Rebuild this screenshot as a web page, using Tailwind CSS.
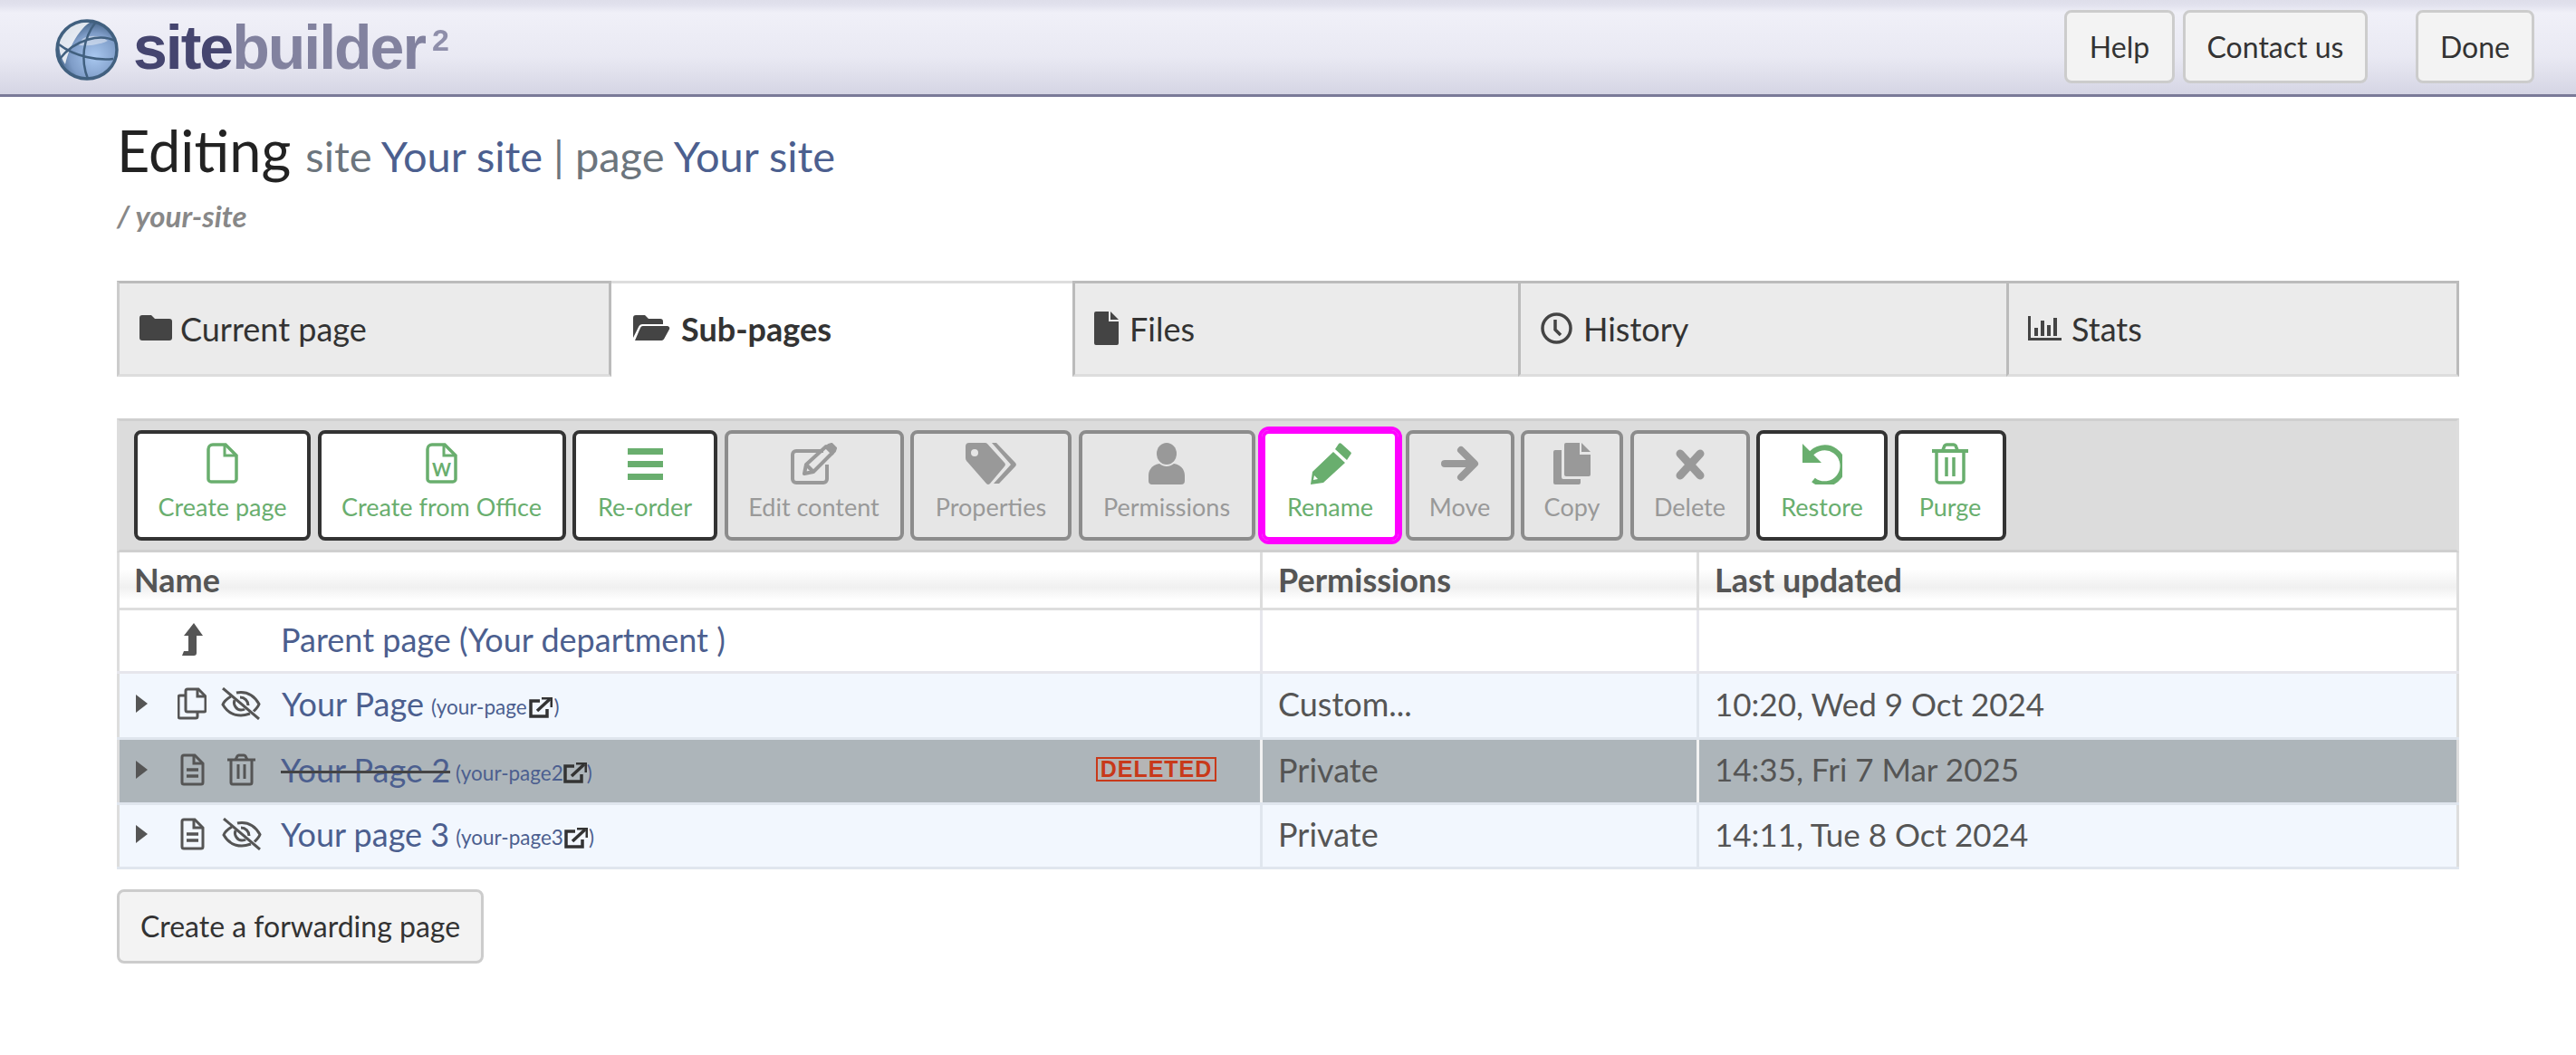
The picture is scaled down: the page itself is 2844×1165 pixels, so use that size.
<!DOCTYPE html>
<html lang="en">
<head>
  <meta charset="UTF-8">
  <title>Sitebuilder - Editing Your site</title>
  <script src="https://cdn.jsdelivr.net/npm/@tailwindcss/browser@4"></script>
</head>
<body class="bg-white font-['Lato','Noto_Sans',sans-serif] text-[#333]">
  <!-- Header -->
  <header class="h-[107px] border-b-[3px] border-[#7a7a98] bg-[linear-gradient(to_bottom,#dedeea_0,#e2e2ee_6px,#f0f0f8_14px,#e9e9f3_60%,#d5d5e4_100%)] flex items-start justify-between pl-[61px] pr-[46px]">
    <div class="flex items-start blur-[0.6px]">
      <svg class="mt-[21px] w-[70px] h-[68px]" viewBox="0 0 70 68">
        <defs>
          <radialGradient id="globe" cx="0.62" cy="0.62" r="0.6">
            <stop offset="0" stop-color="#a9c8f0"/>
            <stop offset="0.65" stop-color="#7f9dc8"/>
            <stop offset="1" stop-color="#456488"/>
          </radialGradient>
        </defs>
        <ellipse cx="35" cy="34" rx="34" ry="33" fill="url(#globe)"/>
        <path d="M8 14C16 6 26 3 38 4 28 10 16 28 11 50 4 40 2 26 8 14z" fill="#f2f4f8" opacity="0.9"/>
        <path d="M30 22c8-5 20-4 28 2-8 4-20 6-32 5z" fill="#dfe6f2" opacity="0.6"/>
        <g fill="none" stroke="#41607f" stroke-width="2.500">
          <ellipse cx="35" cy="34" rx="33" ry="32" stroke-width="3.500"/>
          <path d="M45 3C30 22 28 46 36 66M66 24C50 16 22 22 5 44M4 28C22 42 48 46 64 44"/>
        </g>
      </svg>
      <div class="ml-[16px] mt-[13px] font-['Liberation_Sans',sans-serif] font-bold text-[68px] leading-[78px] tracking-[-2px] text-[#82829f]"><span class="text-[#45456f]">site</span>builder</div>
      <div class="ml-[8px] mt-[24px] font-['Liberation_Sans',sans-serif] font-bold text-[34px] leading-[40px] text-[#8e8eaa]">2</div>
    </div>
    <nav class="flex items-start pt-[11px] text-[32px] leading-[40px] text-[#333]">
      <a class="h-[81px] w-[122px] flex items-center justify-center rounded-[8px] border-[3px] border-[#ccc] bg-[#f3f3f3]">Help</a>
      <a class="h-[81px] w-[204px] ml-[9px] flex items-center justify-center rounded-[8px] border-[3px] border-[#ccc] bg-[#f3f3f3]">Contact us</a>
      <a class="h-[81px] w-[131px] ml-[53px] flex items-center justify-center rounded-[8px] border-[3px] border-[#ccc] bg-[#f3f3f3]">Done</a>
    </nav>
  </header>

  <main class="px-[129px]">
    <h1 class="pt-[23px] h-[96px] font-normal text-[63px] leading-[72px] text-[#222] whitespace-nowrap">Editing <span class="text-[47px] text-[#6c757d]">site <a class="text-[#4c5f8f]">Your site</a> | page <a class="text-[#4c5f8f]">Your site</a></span></h1>
    <div class="mt-[15px] h-[40px] text-[33px] leading-[40px] italic font-bold text-[#888]">/ your-site</div>

    <!-- Tabs -->
    <div class="mt-[52px] flex h-[106px] text-[36px] text-[#333]">
      <a class="w-[546px] flex items-start pt-[28px] pl-[22px] gap-[9px] bg-[#ebebeb] border-t-[3px] border-l-[3px] border-r-[3px] border-b-[3px] border-t-[#bbb] border-l-[#ccc] border-r-[#bbb] border-b-[#ddd]">
        <svg class="w-[36px] h-[28px] mt-[7px]" viewBox="0 0 36 28" fill="#444"><path d="M3 0h10l4 4h16a3 3 0 0 1 3 3v18a3 3 0 0 1-3 3H3a3 3 0 0 1-3-3V3a3 3 0 0 1 3-3z"/></svg>
        <span class="leading-[44px]">Current page</span>
      </a>
      <a class="w-[509px] flex items-start pt-[28px] pl-[24px] gap-[12px] bg-white font-bold border-t-[3px] border-b-0 border-[#ddd]">
        <svg class="w-[41px] h-[28px] mt-[7px]" viewBox="0 0 41 28" fill="#444"><path d="M3 0h10l4 4h13a3 3 0 0 1 3 3v3H11a5 5 0 0 0-5 3L0 25V3a3 3 0 0 1 3-3z"/><path d="M11 12h27a2.500 2.500 0 0 1 2 3.500l-6 11a3 3 0 0 1-2.500 1.500H2l6-14a3 3 0 0 1 3-2z"/></svg>
        <span class="leading-[44px]">Sub-pages</span>
      </a>
      <a class="w-[492px] flex items-start pt-[28px] pl-[21px] gap-[12px] bg-[#ebebeb] border-t-[3px] border-l-[3px] border-b-[3px] border-t-[#bbb] border-l-[#bbb] border-b-[#ddd]">
        <svg class="w-[27px] h-[37px] mt-[3px]" viewBox="0 0 27 37" fill="#444"><path d="M2 0h14v11h11v24a2 2 0 0 1-2 2H2a2 2 0 0 1-2-2V2a2 2 0 0 1 2-2z"/><path d="M18 0l9 9h-9z"/></svg>
        <span class="leading-[44px]">Files</span>
      </a>
      <a class="w-[539px] flex items-start pt-[28px] pl-[22px] gap-[12px] bg-[#ebebeb] border-t-[3px] border-l-[3px] border-b-[3px] border-t-[#bbb] border-l-[#bbb] border-b-[#ddd]">
        <svg class="w-[35px] h-[35px] mt-[4px]" viewBox="0 0 35 35" fill="none" stroke="#444" stroke-width="3.500"><circle cx="17.500" cy="17.500" r="15.500"/><path d="M16 8v11l6 6"/></svg>
        <span class="leading-[44px]">History</span>
      </a>
      <a class="flex-1 flex items-start pt-[28px] pl-[21px] gap-[11px] bg-[#ebebeb] border-t-[3px] border-l-[3px] border-r-[3px] border-b-[3px] border-t-[#bbb] border-l-[#bbb] border-r-[#bbb] border-b-[#ddd]">
        <svg class="w-[37px] h-[27px] mt-[8px]" viewBox="0 0 37 27" fill="#444"><path d="M0 0h3v24h34v3H0z"/><path d="M7 13h4v9H7zM14 5h4v17h-4zM21 10h4v12h-4zM28 2h4v20h-4z"/></svg>
        <span class="leading-[44px]">Stats</span>
      </a>
    </div>

    <!-- Toolbar -->
    <div class="mt-[46px] h-[148px] bg-[#dcdcdc] border-y-[3px] border-y-[#cfcfcf] border-x-[3px] border-x-[#ddd] pl-[16px] pt-[10px] flex gap-[7.500px] text-[27px] leading-[32px]">
      <button class="h-[122px] w-[195px] rounded-[8px] border-4 border-[#333] bg-white text-[#69ae6e] flex flex-col items-center pt-[10px]">
        <svg class="w-[35px] h-[45px]" viewBox="0 0 35 45" fill="none" stroke="currentColor" stroke-width="3.500"><path d="M7 2h14l12 12v26a3 3 0 0 1-3 3H5a3 3 0 0 1-3-3V7a5 5 0 0 1 5-5z"/><path d="M20 3v11h12" stroke-width="3"/></svg>
        <span class="mt-[10px] whitespace-nowrap">Create page</span>
      </button>
      <button class="h-[122px] w-[274px] rounded-[8px] border-4 border-[#333] bg-white text-[#69ae6e] flex flex-col items-center pt-[10px]">
        <svg class="w-[35px] h-[45px]" viewBox="0 0 35 45" fill="none" stroke="currentColor" stroke-width="3.500"><path d="M7 2h14l12 12v26a3 3 0 0 1-3 3H5a3 3 0 0 1-3-3V7a5 5 0 0 1 5-5z"/><path d="M20 3v11h12" stroke-width="3"/><text x="17.500" y="37" text-anchor="middle" font-family="Lato" font-weight="700" font-size="20" fill="currentColor" stroke="none">W</text></svg>
        <span class="mt-[10px] whitespace-nowrap">Create from Office</span>
      </button>
      <button class="h-[122px] w-[160px] rounded-[8px] border-4 border-[#333] bg-white text-[#69ae6e] flex flex-col items-center pt-[10px]">
        <svg class="w-[39px] h-[45px]" viewBox="0 0 39 45" fill="currentColor"><path d="M0 6h39v7H0zM0 20h39v7H0zM0 34h39v7H0z"/></svg>
        <span class="mt-[10px] whitespace-nowrap">Re-order</span>
      </button>
      <button class="h-[122px] w-[198px] rounded-[8px] border-4 border-[#8c8c8c] bg-[#e6e6e6] text-[#999] flex flex-col items-center pt-[10px]">
        <svg class="w-[51px] h-[46px]" viewBox="0 0 51 46" fill="none" stroke="currentColor" stroke-width="4"><path d="M36 9H6a4 4 0 0 0-4 4v27a4 4 0 0 0 4 4h30a4 4 0 0 0 4-4V24"/><path d="M15 34l2-10L39 4l7 7-21 21z" stroke-linejoin="round"/><path d="M42 3l3-1 4 4-1 3-2 2-6-6z" fill="currentColor"/><path d="M18 25l6 6" /></svg>
        <span class="mt-[9px] whitespace-nowrap">Edit content</span>
      </button>
      <button class="h-[122px] w-[178px] rounded-[8px] border-4 border-[#8c8c8c] bg-[#e6e6e6] text-[#999] flex flex-col items-center pt-[10px]">
        <svg class="w-[56px] h-[46px]" viewBox="0 0 56 46" fill="currentColor"><path fill-rule="evenodd" d="M4 0h17a4 4 0 0 1 3 1l19 21a3 3 0 0 1 0 4L27 45a3 3 0 0 1-4 0L2 21a5 5 0 0 1-2-4V4a4 4 0 0 1 4-4zm6 7a4 4 0 1 0 0 8 4 4 0 0 0 0-8z"/><path d="M29 0h5l21 22a3 3 0 0 1 0 4L37 45h-6l19-21z"/></svg>
        <span class="mt-[9px] whitespace-nowrap">Properties</span>
      </button>
      <button class="h-[122px] w-[195px] rounded-[8px] border-4 border-[#8c8c8c] bg-[#e6e6e6] text-[#999] flex flex-col items-center pt-[10px]">
        <svg class="w-[40px] h-[46px]" viewBox="0 0 40 46" fill="currentColor"><ellipse cx="20" cy="12" rx="11" ry="12"/><path d="M12 23c5 4 11 4 16 0 7 1 12 6 12 13v6a4 4 0 0 1-4 4H4a4 4 0 0 1-4-4v-6c0-7 5-12 12-13z"/></svg>
        <span class="mt-[9px] whitespace-nowrap">Permissions</span>
      </button>
      <button class="h-[122px] w-[151px] rounded-[8px] border-4 border-[#f0f] outline-4 outline-[#f0f] bg-white text-[#69ae6e] flex flex-col items-center pt-[10px]">
        <svg class="w-[47px] h-[46px]" viewBox="0 0 47 46" fill="currentColor"><path d="M36 1l10 9a2 2 0 0 1 0 3l-4 6-13-12 4-6a2 2 0 0 1 3 0zM27 10l13 12-24 22-14 2 2-14zM6 36l-1 5 5-1z"/></svg>
        <span class="mt-[9px] whitespace-nowrap">Rename</span>
      </button>
      <button class="h-[122px] w-[120px] rounded-[8px] border-4 border-[#8c8c8c] bg-[#e6e6e6] text-[#999] flex flex-col items-center pt-[10px]">
        <svg class="w-[42px] h-[46px]" viewBox="0 0 42 46" fill="none" stroke="currentColor" stroke-width="8" stroke-linecap="round" stroke-linejoin="round"><path d="M4 23h32M22 8l15 15-15 15"/></svg>
        <span class="mt-[9px] whitespace-nowrap">Move</span>
      </button>
      <button class="h-[122px] w-[113px] rounded-[8px] border-4 border-[#8c8c8c] bg-[#e6e6e6] text-[#999] flex flex-col items-center pt-[10px]">
        <svg class="w-[41px] h-[46px]" viewBox="0 0 41 46" fill="currentColor"><path d="M14 0h15v13h12v22a2 2 0 0 1-2 2H14a2 2 0 0 1-2-2V2a2 2 0 0 1 2-2z"/><path d="M31 0l10 10H31z"/><path d="M9 8v30a2 2 0 0 0 2 2h19v4a2 2 0 0 1-2 2H2a2 2 0 0 1-2-2V10a2 2 0 0 1 2-2z"/></svg>
        <span class="mt-[9px] whitespace-nowrap">Copy</span>
      </button>
      <button class="h-[122px] w-[132px] rounded-[8px] border-4 border-[#8c8c8c] bg-[#e6e6e6] text-[#999] flex flex-col items-center pt-[10px]">
        <svg class="w-[32px] h-[46px]" viewBox="0 0 32 46" fill="none" stroke="currentColor" stroke-width="9" stroke-linecap="round"><path d="M5 12l22 24M27 12L5 36"/></svg>
        <span class="mt-[9px] whitespace-nowrap">Delete</span>
      </button>
      <button class="h-[122px] w-[145px] rounded-[8px] border-4 border-[#333] bg-white text-[#69ae6e] flex flex-col items-center pt-[10px]">
        <svg class="w-[45px] h-[46px]" viewBox="0 0 45 46"><path d="M1 1v21h21z" fill="currentColor"/><path d="M9 14A20 20 0 1 1 13 41" fill="none" stroke="currentColor" stroke-width="6"/></svg>
        <span class="mt-[9px] whitespace-nowrap">Restore</span>
      </button>
      <button class="h-[122px] w-[123px] rounded-[8px] border-4 border-[#333] bg-white text-[#69ae6e] flex flex-col items-center pt-[10px]">
        <svg class="w-[40px] h-[46px]" viewBox="0 0 40 46" fill="none" stroke="currentColor" stroke-width="3.500"><path d="M0 9h40" stroke-width="4"/><path d="M12 8l2-5a3 3 0 0 1 3-1h6a3 3 0 0 1 3 1l2 5"/><path d="M5 9v32a3 3 0 0 0 3 3h24a3 3 0 0 0 3-3V9"/><path d="M16 16v21M24 16v21" stroke-width="3.500"/></svg>
        <span class="mt-[9px] whitespace-nowrap">Purge</span>
      </button>
    </div>

    <!-- Sub-pages table -->
    <table class="w-full table-fixed border-collapse text-[36px] text-[#555]">
      <colgroup>
        <col class="w-[1262px]">
        <col class="w-[482px]">
        <col>
      </colgroup>
      <thead>
        <tr class="h-[62px] bg-[linear-gradient(to_bottom,#fff_0%,#fff_30%,#f0f0f0_62%,#fff_85%)] font-bold text-left">
          <th class="pl-[16px] border-[3px] border-t-0 border-[#ddd]">Name</th>
          <th class="pl-[17px] border-[3px] border-t-0 border-[#ddd]">Permissions</th>
          <th class="pl-[17px] border-[3px] border-t-0 border-[#ddd]">Last updated</th>
        </tr>
      </thead>
      <tbody class="[&_td]:pb-[3px]">
        <tr class="h-[70px] bg-white">
          <td class="border-[3px] border-[#e6e6ec] border-l-[#ddd] pl-[69px]">
            <div class="flex items-center">
              <svg class="w-[24px] h-[36px]" viewBox="0 0 24 36" fill="#555"><path d="M13 0l10 14h-7v19a3 3 0 0 1-3 3H0l2-5h5V14H2z"/></svg>
              <a class="ml-[85px] text-[#4c5f8f] text-[36px]">Parent page (Your department )</a>
            </div>
          </td>
          <td class="border-[3px] border-[#e6e6ec]"></td>
          <td class="border-[3px] border-[#e6e6ec] border-r-[#ddd]"></td>
        </tr>
        <tr class="h-[73px] bg-[#f2f7fe]">
          <td class="border-[3px] border-[#e0e6ee] border-l-[#ddd] pl-[18px]">
            <div class="flex items-center">
              <svg class="w-[13px] h-[20px]" viewBox="0 0 13 20" fill="#555"><path d="M0 0l13 10L0 20z"/></svg>
              <svg class="ml-[33px] w-[32px] h-[36px]" viewBox="0 0 32 36" fill="none" stroke="#555" stroke-width="3"><path d="M11 2h12l8 8v15a2 2 0 0 1-2 2H11a2 2 0 0 1-2-2V4a2 2 0 0 1 2-2z"/><path d="M22 2v8h8M9 9H3a2 2 0 0 0-2 2v21a2 2 0 0 0 2 2h17a2 2 0 0 0 2-2v-5"/></svg>
              <svg class="ml-[16px] w-[44px] h-[36px]" viewBox="0 0 44 36" fill="none" stroke="#555" stroke-width="3"><path d="M2 1l40 34" /><path d="M11 10C6 13 3 16 2 19c4 7 11 12 20 12 4 0 7-1 10-2M17 6c2-.500 3-.500 5-.500 9 0 16 6 20 13-1 3-3 5-6 8"/><path d="M15 14c-2 5 2 11 7 11 2 0 3 0 4-1M21 11c5 0 9 4 9 9"/></svg>
              <a class="ml-[23px] text-[#4c5f8f] text-[36px]">Your Page</a>
              <span class="ml-[8px] mt-[8px] text-[22.500px] text-[#4c5f8f] flex items-center">(your-page<svg class="mx-[2px] w-[26px] h-[23px]" viewBox="0 0 26 23" fill="none" stroke="#333" stroke-width="3.500"><path d="M12 4H2v17h18V13"/><path d="M9 15L23 2" /><path d="M14 1h11v10" stroke-width="3"/></svg>)</span>
            </div>
          </td>
          <td class="pl-[17px] border-[3px] border-[#e0e6ee]">Custom...</td>
          <td class="pl-[17px] border-[3px] border-[#e0e6ee] border-r-[#ddd] text-[35px]">10:20, Wed 9 Oct 2024</td>
        </tr>
        <tr class="h-[72px] bg-[#adb5ba]">
          <td class="border-[3px] border-[#e0e6ee] border-l-[#ddd] border-r-[#f2f2f2] pl-[18px]">
            <div class="flex items-center">
              <svg class="w-[13px] h-[20px]" viewBox="0 0 13 20" fill="#555"><path d="M0 0l13 10L0 20z"/></svg>
              <svg class="ml-[36px] w-[27px] h-[36px]" viewBox="0 0 27 36" fill="none" stroke="#555" stroke-width="3"><path d="M4 2h12l9 9v21a2 2 0 0 1-2 2H4a2 2 0 0 1-2-2V4a2 2 0 0 1 2-2z"/><path d="M15 2v9h10"/><path d="M7 18h13M7 25h13" stroke-width="3.500"/></svg>
              <svg class="ml-[25px] w-[31px] h-[36px]" viewBox="0 0 31 36" fill="none" stroke="#555" stroke-width="3"><path d="M0 7h31"/><path d="M9 7l2-4a2 2 0 0 1 2-1h5a2 2 0 0 1 2 1l2 4"/><path d="M4 7v25a2 2 0 0 0 2 2h19a2 2 0 0 0 2-2V7M12 12v16M19 12v16"/></svg>
              <a class="ml-[28px] text-[#4c5f8f] text-[36px] line-through decoration-[#444] decoration-[3px]">Your Page 2</a>
              <span class="ml-[6px] mt-[8px] text-[22.500px] text-[#4c5f8f] flex items-center">(your-page2<svg class="w-[26px] h-[23px]" viewBox="0 0 26 23" fill="none" stroke="#333" stroke-width="3.500"><path d="M12 4H2v17h18V13"/><path d="M9 15L23 2" /><path d="M14 1h11v10" stroke-width="3"/></svg>)</span>
              <span class="ml-auto mr-[48px] h-[27px] w-[133px] border-[2px] border-[#c8391a] bg-[#b5b5b5] text-[#c8391a] font-['Liberation_Sans',sans-serif] font-bold text-[25px] leading-[23px] tracking-[1px] text-center">DELETED</span>
            </div>
          </td>
          <td class="pl-[17px] border-[3px] border-[#e0e6ee] border-x-[#f2f2f2]">Private</td>
          <td class="pl-[17px] border-[3px] border-[#e0e6ee] border-l-[#f2f2f2] border-r-[#ddd] text-[35px]">14:35, Fri 7 Mar 2025</td>
        </tr>
        <tr class="h-[71px] bg-[#f2f7fe]">
          <td class="border-[3px] border-[#e0e6ee] border-l-[#ddd] pl-[18px]">
            <div class="flex items-center">
              <svg class="w-[13px] h-[20px]" viewBox="0 0 13 20" fill="#555"><path d="M0 0l13 10L0 20z"/></svg>
              <svg class="ml-[36px] w-[27px] h-[36px]" viewBox="0 0 27 36" fill="none" stroke="#555" stroke-width="3"><path d="M4 2h12l9 9v21a2 2 0 0 1-2 2H4a2 2 0 0 1-2-2V4a2 2 0 0 1 2-2z"/><path d="M15 2v9h10"/><path d="M7 18h13M7 25h13" stroke-width="3.500"/></svg>
              <svg class="ml-[19px] w-[44px] h-[36px]" viewBox="0 0 44 36" fill="none" stroke="#555" stroke-width="3"><path d="M2 1l40 34" /><path d="M11 10C6 13 3 16 2 19c4 7 11 12 20 12 4 0 7-1 10-2M17 6c2-.500 3-.500 5-.500 9 0 16 6 20 13-1 3-3 5-6 8"/><path d="M15 14c-2 5 2 11 7 11 2 0 3 0 4-1M21 11c5 0 9 4 9 9"/></svg>
              <a class="ml-[21px] text-[#4c5f8f] text-[36px]">Your page 3</a>
              <span class="ml-[7px] mt-[8px] text-[22.500px] text-[#4c5f8f] flex items-center">(your-page3<svg class="mx-[1px] w-[26px] h-[23px]" viewBox="0 0 26 23" fill="none" stroke="#333" stroke-width="3.500"><path d="M12 4H2v17h18V13"/><path d="M9 15L23 2" /><path d="M14 1h11v10" stroke-width="3"/></svg>)</span>
            </div>
          </td>
          <td class="pl-[17px] border-[3px] border-[#e0e6ee]">Private</td>
          <td class="pl-[17px] border-[3px] border-[#e0e6ee] border-r-[#ddd] text-[35px]">14:11, Tue 8 Oct 2024</td>
        </tr>
      </tbody>
    </table>

    <button class="mt-[22px] h-[82px] w-[405px] rounded-[8px] border-[3px] border-[#ccc] bg-[#f3f3f3] text-[32px] text-[#333] whitespace-nowrap">Create a forwarding page</button>
  </main>
</body>
</html>
